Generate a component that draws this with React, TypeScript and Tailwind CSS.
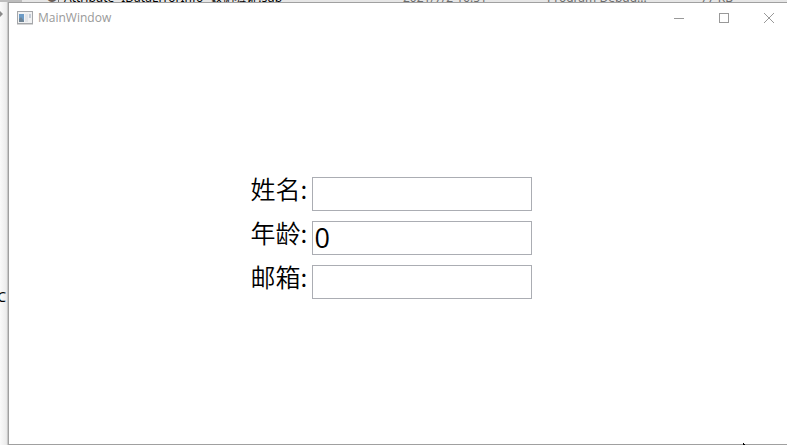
import React from "react";

const fields = [
  { id: "name", label: "姓名:", type: "text", value: "" },
  { id: "age", label: "年龄:", type: "text", value: "0" },
  { id: "email", label: "邮箱:", type: "email", value: "" },
];

const AppIcon = () => (
  <svg className="w-4 h-3.5" viewBox="0 0 16 14" aria-hidden="true">
    <rect x="0.5" y="0.5" width="15" height="12" fill="#f1f2f3" stroke="#a5a7aa" />
    <path d="M0 13.5h16" stroke="#d5d5d5" />
    <rect x="2" y="3" width="5" height="8" fill="#6c9bc6" />
    <path d="M2 11V8l2-2 3 4v1z" fill="#6e8394" />
    <rect x="8" y="3" width="3" height="8" fill="#e2e4e8" />
    <rect x="12" y="3" width="2" height="4" fill="#c3cbd6" />
  </svg>
);

const App: React.FC = () => {
  const [values, setValues] = React.useState<Record<string, string>>(
    Object.fromEntries(fields.map((f) => [f.id, f.value]))
  );

  return (
    <div className="min-h-screen flex flex-col bg-[#e6e6e6] font-['Noto_Sans','Noto_Sans_CJK_SC',sans-serif]">
      {/* bottom edge of the file list behind the window */}
      <div className="h-0.5 shrink-0 overflow-hidden flex items-end text-xs whitespace-nowrap">
        <div className="w-[22px] shrink-0 h-full bg-[#bdbdbd]" />
        <div className="flex-1 flex leading-[8px] pl-6 text-black">
          <span className="w-3 text-[#6b5f58]">●</span>
          <span className="w-1.5 border-l border-[#6d6d6d]" />
          <span className="w-[339px]">Attribute -IDataErrorInfo -数据验证.sub</span>
          <span className="w-36 text-[#6d6d6d]">2021/7/2 16:51</span>
          <span className="w-[154px] text-[#6d6d6d]">Program Debug...</span>
          <span className="text-[#6d6d6d]">77 KB</span>
        </div>
      </div>

      <div className="flex-1 flex">
        <div className="w-2 shrink-0 overflow-hidden flex flex-col justify-between pt-2 pb-[140px] bg-linear-to-r from-[#fafafa] via-[#ececec] via-80% to-[#b8b8b8]">
          <svg className="w-1 h-2" viewBox="0 0 4 8" aria-hidden="true">
            <path d="M0 1l3 3-3 3z" fill="#8a8a8a" />
          </svg>
          <div className="w-1.5 overflow-hidden flex justify-end text-sm leading-4 text-black">C</div>
        </div>

        <div className="relative flex-1 min-w-0 flex flex-col bg-white border border-r-0 border-[#a0a0a0]">
          <header className="flex items-center h-[29px] pl-2 text-[#999999]">
            <AppIcon />
            <h1 className="flex-1 pl-[5px] text-xs font-['Open_Sans',sans-serif]">MainWindow</h1>
            <div className="flex h-full -mr-1">
              <button type="button" aria-label="Minimize" className="w-[45px] h-full flex items-center justify-center">
                <svg className="w-2.5 h-2.5" viewBox="0 0 10 10" stroke="currentColor">
                  <path d="M0 5.5h10" />
                </svg>
              </button>
              <button type="button" aria-label="Maximize" className="w-[45px] h-full flex items-center justify-center">
                <svg className="w-2.5 h-2.5" viewBox="0 0 10 10" stroke="currentColor" fill="none">
                  <rect x="0.5" y="0.5" width="9" height="9" />
                </svg>
              </button>
              <button type="button" aria-label="Close" className="w-[45px] h-full flex items-center justify-center">
                <svg className="w-2.5 h-2.5" viewBox="0 0 10 10" stroke="currentColor">
                  <path d="M0 0l10 10M10 0L0 10" />
                </svg>
              </button>
            </div>
          </header>

          <main className="flex-1 flex items-center justify-center pr-3.5">
            <form className="flex flex-col gap-2.5 text-black">
              {fields.map((f) => (
                <div key={f.id} className="flex">
                  <label
                    htmlFor={f.id}
                    className="w-[61px] text-[25px] leading-[22px] font-['Noto_Sans_CJK_SC',sans-serif] font-[350]"
                  >
                    {f.label}
                  </label>
                  <input
                    id={f.id}
                    type={f.type}
                    value={values[f.id]}
                    onChange={(e) => setValues({ ...values, [f.id]: e.target.value })}
                    className="w-[220px] h-[34px] px-0.5 border border-[#abadb3] bg-white text-[27px] font-['Open_Sans',sans-serif] outline-none"
                  />
                </div>
              ))}
            </form>
          </main>

          {/* tip of the mouse pointer at the window's edge */}
          <svg className="absolute right-[42px] bottom-[-1px] w-0.5 h-0.5" viewBox="0 0 2 2" aria-hidden="true">
            <path d="M0 0h1v1h1v1H0z" fill="#000" />
          </svg>
        </div>
      </div>
    </div>
  );
};

export default App;
